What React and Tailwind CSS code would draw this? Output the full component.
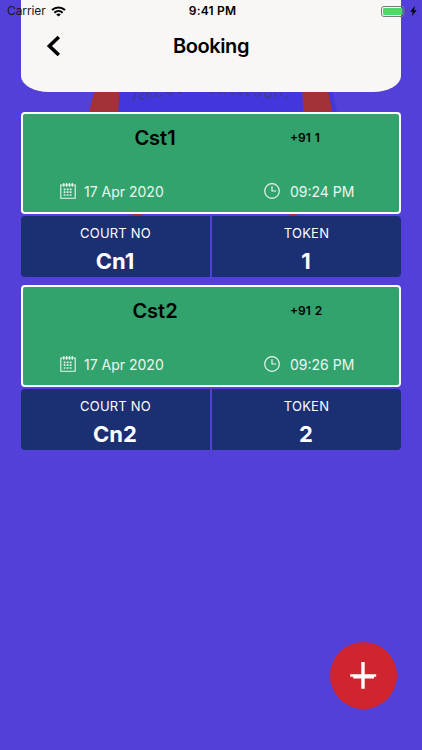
const bookings = [
  { id: 1, customer: 'Cst1', phone: '+91 1', date: '17 Apr 2020', time: '09:24 PM', court: 'Cn1', token: '1' },
  { id: 2, customer: 'Cst2', phone: '+91 2', date: '17 Apr 2020', time: '09:26 PM', court: 'Cn2', token: '2' },
];

function CalendarIcon() {
  return (
    <svg className="w-4 h-4 shrink-0" viewBox="0 0 16 16" fill="none" stroke="currentColor">
      <path strokeWidth="1.1" d="M.8 2h14.4v13.2H.8z" />
      <path strokeWidth="1.2" d="M3.8 0v3.8M6.7 0v3.8M9.5 0v3.8M12.3 0v3.8" />
      <path strokeWidth="1.7" strokeDasharray="1.8 1.2" d="M3.7 6.4h9M3.7 9.2h9M3.7 12h9" />
    </svg>
  );
}

function ClockIcon() {
  return (
    <svg className="w-4 h-4 shrink-0" viewBox="0 0 16 16" fill="none" stroke="currentColor">
      <circle cx="8" cy="8" r="7.3" strokeWidth="1.2" />
      <path strokeWidth="1.2" d="M8 3.2V8h4.3" />
    </svg>
  );
}

function StatusBar() {
  return (
    <div className="absolute inset-x-0 top-0 z-20 flex h-[22px] items-center text-[12px] text-[#17171c]">
      <div className="flex flex-1 items-center pl-[7px]">
        <span className="tracking-[-0.1px]">Carrier</span>
        <svg className="ml-[5px] h-[11px] w-[15px]" viewBox="0 0 15 11" fill="none" stroke="black" strokeWidth="2">
          <path d="M1 4.1C4.8.5 10.2.5 14 4.1" />
          <path d="M3.4 6.7c2.4-2.2 5.8-2.2 8.2 0" />
          <path d="M7.5 10.6 5.2 8.4c1.3-1.1 3.3-1.1 4.6 0z" fill="black" stroke="none" />
        </svg>
      </div>
      <span className="ml-px font-semibold text-black tracking-[0.2px]">9:41 PM</span>
      <div className="flex flex-1 items-center justify-end pr-[5px]">
        <svg className="h-[11px] w-[27px]" viewBox="0 0 27 11">
          <rect x=".5" y=".5" width="22.5" height="10" rx="2.5" fill="none" stroke="#777b80" />
          <rect x="2" y="2" width="19.5" height="7" rx="1.2" fill="#4cd964" />
          <path d="M24.3 3.8c1.4.5 1.4 2.9 0 3.4z" fill="#555" />
        </svg>
        <svg className="ml-[2px] h-[10px] w-[7px]" viewBox="0 0 7 10" fill="black">
          <path d="M4.9 0 .2 5.7h2.6L1.9 10l4.8-5.8H4.1z" />
        </svg>
      </div>
    </div>
  );
}

function Backdrop() {
  return (
    <svg className="absolute inset-0 h-full w-full" viewBox="0 0 422 750" fill="none">
      <path d="M95 85h236l6 27v90H90v-90z" fill="#4336dd" />
      <path d="M96 85h24l-2 30-4 66 28 33-2 2h-6l-54-70z" fill="#a43135" />
      <path d="M302 85h25l12 60-43 71h-5l-2-2 18-33z" fill="#a43135" />
      {/* lower edge of the arched lettering behind the header */}
      <g stroke="#413b8c" strokeWidth="1.5">
        <path d="M133 101l3-9M144 94c-6-1-6 7 0 5M148 99l-2-7M147 94c3-2 4-1 5 4M156 91c-2 6 5 7 6 3M167 91c0 4 5 4 6 1M178 93h4" />
        <path d="M209 93h4M217 93h4M225 92v2M230 93.5h5M238 94h5M246 92v3h4M254 91c-1 7 7 7 6 0M265 92c-2 6 5 7 6 1M269 97l2 1M275 92v6M281 93v3M287 95l-1 3" />
      </g>
    </svg>
  );
}

function BookingCard({ booking }) {
  return (
    <div className="flex flex-col gap-[2px]">
      <div className="h-[102px] rounded-[4px] border-2 border-white bg-[#32a36c]">
        <div className="grid h-[48px] grid-cols-[264px_1fr] items-center">
          <p className="text-center text-[20px] font-semibold text-black">{booking.customer}</p>
          <p className="pl-[3px] text-[12px] font-semibold text-black [word-spacing:1px]">{booking.phone}</p>
        </div>
        <div className="flex h-[58px] items-center pl-[37px] text-[14px] text-white/90">
          <CalendarIcon />
          <span className="ml-2 w-[180px]">{booking.date}</span>
          <ClockIcon />
          <span className="ml-[10px]">{booking.time}</span>
        </div>
      </div>
      <div className="grid grid-cols-2 gap-[2px] text-center text-white">
        <div className="h-[61px] rounded-l-[4px] bg-[#1b2f73] pt-2">
          <p className="text-[13px] leading-[18px] tracking-[0.2px]">COURT NO</p>
          <p className="mt-[5px] pr-px text-[22px] font-bold leading-7">{booking.court}</p>
        </div>
        <div className="h-[61px] rounded-r-[4px] bg-[#1b2f73] pt-2">
          <p className="text-[13px] leading-[18px] tracking-[0.2px]">TOKEN</p>
          <p className="mt-[5px] pr-px text-[22px] font-bold leading-7">{booking.token}</p>
        </div>
      </div>
    </div>
  );
}

export default function App() {
  return (
    <div className="relative h-[750px] w-full overflow-hidden bg-[#5340d8] font-['Inter',sans-serif]">
      <Backdrop />
      <StatusBar />

      <header className="relative mx-[21px] grid h-[92px] grid-cols-[60px_1fr_60px] items-center rounded-bl-[28px_16px] rounded-br-[28px_16px] bg-[#f8f7f6]">
        <button className="ml-[25px]" aria-label="Back">
          <svg className="h-[22px] w-[15px]" viewBox="0 0 15 22" fill="none" stroke="black" strokeWidth="3.6">
            <path d="M12.8 2 3.4 11l9.4 9" />
          </svg>
        </button>
        <h1 className="text-center text-[20px] font-semibold tracking-[-0.4px] text-black">Booking</h1>
      </header>

      <main className="relative mx-[21px] mt-5 flex flex-col gap-2">
        {bookings.map((booking) => (
          <BookingCard key={booking.id} booking={booking} />
        ))}
      </main>

      <button
        className="absolute left-[330px] top-[642px] flex h-[67px] w-[67px] items-center justify-center rounded-full bg-[#d0242e]"
        aria-label="Add booking"
      >
        <svg className="h-[27px] w-[27px]" viewBox="0 0 27 27" fill="white">
          <path d="M11.3 0h3.4v12.2h11.5v2.6H24v1.6h-9.3v10.4h-3.4V16.4H3.2v-1.6H.2v-2.6h11.1z" />
        </svg>
      </button>
    </div>
  );
}
